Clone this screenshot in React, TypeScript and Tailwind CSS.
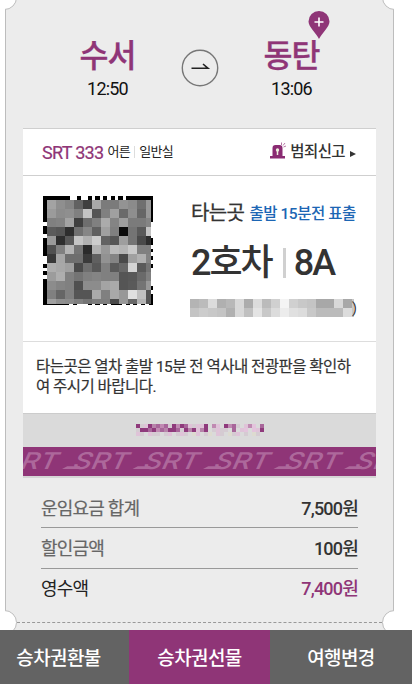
import type { ReactNode } from 'react';

const QR_CELLS = [
  'a38f85623fa97b7b938b6f98',
  '9b8c8f80c45580a06a8e6698',
  '8083a33f6e80ab849e7b7b85',
  '5b552e708660a0800b745ac4',
  '9a2e58c4b0cc62569e744a2e',
  '5080b4742ab098bbb4c88080',
  '38a66e6e3a6092844aa0b084',
  'aea8a04a6e58805a68d45a74',
  '9cae80748084808055586a80',
  '8c8480508c8ca4aa555a7498',
  '8066805555aa80a898e0c055',
  'a0908c80747e7e4a9868b455',
];

const SERIAL_CELLS = [
  'b4bbdcb0b8d8acdcbbd0f4d0c8c4a8a8d8a8c8',
  'c4ccc8c4b0d8c0e4c8dcece0dcc8bbbbbbdcc8',
];

// one letter per cell, see STAMP_COLORS
const STAMP_CELLS = [
  'agfacbmbgamabfgffa.mf.ambg.fml.b',
  'gaabambcaabgacafca.gfgg.b.fl.lfa',
  'fg.fgg.gf.gfg.hf.gh.fg.hgf.g.hg.',
];

const STAMP_COLORS: Record<string, string> = {
  a: '#8f3a7c',
  b: '#a8669a',
  c: '#b784aa',
  f: '#dfc3d8',
  g: '#d5cbd2',
  h: '#dddbd0',
  l: '#e3c4dc',
  m: '#c08ab2',
};

function GreyMosaic({ rows, size, className }: { rows: string[]; size: number; className: string }) {
  return (
    <svg className={className} shapeRendering="crispEdges">
      {rows.map((row, y) =>
        (row.match(/../g) ?? []).map((v, x) => (
          <rect key={`${x}-${y}`} x={x * size} y={y * size} width={size} height={size} fill={`#${v}${v}${v}`} />
        ))
      )}
    </svg>
  );
}

function QrCode() {
  return (
    <div className="relative h-[110px] w-[110px]">
      <svg className="h-[110px] w-[110px]" viewBox="0 0 110 110" fill="#000">
        <path d="M0 0H27V4H0zM34 0H38V4H34zM45 0H49V4H45zM52 0H57V4H52zM60 0H64V4H60zM68 0H72V4H68zM75 0H80V4H75zM83 0H110V4H83z" />
        <path d="M0 0H4V26H0zM0 30H4V38H0zM0 42H4V60H0zM0 68H4V72H0zM0 75H4V79H0zM0 83H4V109H0z" />
        <path d="M107 0H110V26H107zM107 42H110V49H107zM107 53H110V56H107zM107 60H110V64H107zM107 68H110V72H107zM107 90H110V94H107zM107 98H110V109H107z" />
        <path d="M0 107H26V109H0zM30 107H34V109H30zM45 107H49V109H45zM52 107H57V109H52zM60 107H64V109H60zM68 107H79V109H68zM83 107H87V109H83zM90 107H94V109H90zM98 107H102V109H98zM106 107H110V109H106z" />
      </svg>
      <GreyMosaic rows={QR_CELLS} size={9} className="absolute left-1 top-1 h-[104px] w-[104px]" />
    </div>
  );
}

function Stamp() {
  return (
    <svg className="h-3 w-32" shapeRendering="crispEdges">
      {STAMP_CELLS.map((row, y) =>
        row.split('').map((c, x) =>
          STAMP_COLORS[c] ? (
            <rect key={`${x}-${y}`} x={x * 4} y={y * 4} width={4} height={4} fill={STAMP_COLORS[c]} />
          ) : null
        )
      )}
    </svg>
  );
}

function Notch({ className }: { className: string }) {
  return <div className={`absolute h-[25px] w-[25px] rounded-full border border-[#bdbdbd] bg-white ${className}`} />;
}

function Station({ name, time, children }: { name: string; time: string; children?: ReactNode }) {
  return (
    <div className="relative flex w-[80px] flex-col items-center whitespace-nowrap">
      <div className="text-[31.5px] font-medium leading-[40px] tracking-[-1px] text-[#8f3577] [-webkit-text-stroke:0.3px_#8f3577]">
        {name}
      </div>
      <div className="text-[18px] leading-6 tracking-[-0.8px] text-[#111]">{time}</div>
      {children}
    </div>
  );
}

function PriceRow({ label, value, last }: { label: string; value: string; last?: boolean }) {
  return (
    <div
      className={`flex h-[40.3px] items-center justify-between text-[18px] tracking-[-0.8px] ${
        last ? 'pb-px text-[#222]' : 'border-b border-[#999] pt-px text-[#666] [-webkit-text-stroke:0.2px_#666]'
      }`}
    >
      <span>{label}</span>
      <span
        className={`font-medium [-webkit-text-stroke:0px] ${last ? 'text-[#8f3577]' : 'text-[#333]'}`}
      >
        {value}
      </span>
    </div>
  );
}

export default function App() {
  return (
    <div className="flex h-[684px] w-[412px] flex-col overflow-hidden bg-white font-['Roboto','Noto_Sans_CJK_KR',sans-serif]">
      <div className="relative ml-[5px] h-[630px] w-[389px] overflow-hidden">
        <div className="h-full border-x border-[#bdbdbd] bg-[#ececec] px-[17px]">
          {/* Route */}
          <div className="flex h-32 justify-center pt-[37px]">
            <Station name="수서" time="12:50" />
            <svg className="mx-[33px] mt-[12px] h-[38px] w-[38px]" viewBox="0 0 38 38" fill="none">
              <circle cx="19" cy="19" r="17.7" stroke="#777" strokeWidth="1.4" />
              <path d="M10.5 19.3H27L22 15" stroke="#222" strokeWidth="1.6" />
            </svg>
            <Station name="동탄" time="13:06">
              <svg className="absolute left-[56px] top-[-26px] h-7 w-[22px]" viewBox="0 0 22 28">
                <path d="M11 28C8 22 .5 16 .5 10.5a10.5 10.5 0 0 1 21 0C21.5 16 14 22 11 28z" fill="#8f3577" />
                <path d="M11 6.5V15.5M6.5 11H15.5" stroke="#fff" strokeWidth="1.6" />
              </svg>
            </Station>
          </div>

          {/* Train */}
          <div className="flex h-12 items-center justify-between border-y border-[#cfcfcf] bg-white pl-[19px] pr-[20px]">
            <div className="flex items-center text-[13px] tracking-[-0.6px] text-[#222]">
              <span className="mr-1 text-[18px] tracking-[-0.7px] text-[#8f3577] [-webkit-text-stroke:0.2px_#8f3577]">SRT 333</span>
              어른
              <span className="mx-1 h-3 w-px bg-[#ddd]" />
              일반실
            </div>
            <div className="flex items-center text-[15.5px] font-medium tracking-[-0.6px] text-[#333]">
              <svg className="mr-1 mb-0.5 h-[18px] w-4" viewBox="0 0 16 18">
                <path d="M2.5 14V6q0-3 3-3h4q3 0 3 3v8zM0 14h15v2.5H0z" fill="#8a2b72" />
                <circle cx="7.5" cy="8" r="1.7" fill="#eed" />
                <path d="M7.5 8v5" stroke="#eed" strokeWidth="1.5" />
                <path d="M11.5 3V.5M13 3.5L15 1M13.5 5L16 4" stroke="#b678a6" strokeWidth="1" />
              </svg>
              <span className="pt-0.5">범죄신고</span>
              <svg className="ml-[5px] mt-1 h-[6px] w-[6px]" viewBox="0 0 6 6">
                <path d="M0 0L6 3L0 6z" fill="#333" />
              </svg>
            </div>
          </div>

          {/* Seat */}
          <div className="flex h-[165px] bg-white pl-5 pt-5">
            <QrCode />
            <div className="ml-[38px] whitespace-nowrap text-[#333]">
              <div className="flex h-[34px] items-center">
                <span className="text-[20px] tracking-[-0.6px] [-webkit-text-stroke:0.3px_#333]">타는곳</span>
                <span className="ml-[5px] pt-[3px] text-[15.5px] font-medium tracking-[-0.45px] text-[#1c66b4]">출발 15분전 표출</span>
              </div>
              <div className="mt-[6px] flex h-[54px] items-center text-[36px] font-medium tracking-[-2px]">
                2호차
                <span className="ml-[11px] mr-2 h-[30px] w-[3px] bg-[#d0d0d0]" />
                8A
              </div>
              <div className="mt-[8px] flex h-[20px] items-center">
                <GreyMosaic rows={SERIAL_CELLS} size={9} className="-ml-px h-[18px] w-[164px]" />
                <span className="-ml-[2px] text-[14px]">)</span>
              </div>
            </div>
          </div>

          {/* Notice */}
          <div className="h-[72px] border-t border-[#ddd] bg-white px-[13px] pt-[15px] text-[15.5px] leading-[20px] tracking-[-0.52px] whitespace-nowrap text-[#333] [-webkit-text-stroke:0.2px_#333]">
            타는곳은 열차 출발 15분 전 역사내 전광판을 확인하
            <br />여 주시기 바랍니다.
          </div>
          <div className="flex h-[34px] justify-center border-t border-[#ccc] bg-[#dadada] pt-2.5">
            <Stamp />
          </div>
          <svg className="h-[31px] w-full border-b-2 border-[#d5d5d5] bg-[#8f3577]">
            {[-30.5, 40, 110.5, 181, 251.5, 322].map((x) => (
              <g key={x} transform={`translate(${x} 22) skewX(-24)`} fill="#ad689b">
                <text x="8" y="0" fontFamily="Inter" fontSize="23" fontWeight="500" textLength="55" lengthAdjust="spacingAndGlyphs">
                  SRT
                </text>
                <path d="M-1 0L3-2.800H16V0z" />
              </g>
            ))}
          </svg>

          {/* Price */}
          <div className="px-[18px] pt-[10px]">
            <PriceRow label="운임요금 합계" value="7,500원" />
            <PriceRow label="할인금액" value="100원" />
            <PriceRow label="영수액" value="7,400원" last />
          </div>
        </div>
        <div className="absolute inset-x-3 bottom-[7px] border-t border-dashed border-[#999]" />
        <Notch className="-left-[13px] -top-[15px]" />
        <Notch className="-right-[13px] -top-[15px]" />
        <Notch className="-left-[13px] -bottom-[5px]" />
        <Notch className="-right-[13px] -bottom-[5px]" />
      </div>

      {/* Bottom actions */}
      <div className="flex h-[54px] text-[19px] font-medium tracking-[-0.6px] text-white">
        <button className="w-[129px] bg-[#636363] pt-[5px] pr-3">승차권환불</button>
        <button className="w-[141px] bg-[#8f3577] pt-[5px]">승차권선물</button>
        <button className="w-[142px] bg-[#636363] pt-[5px]">여행변경</button>
      </div>
    </div>
  );
}
